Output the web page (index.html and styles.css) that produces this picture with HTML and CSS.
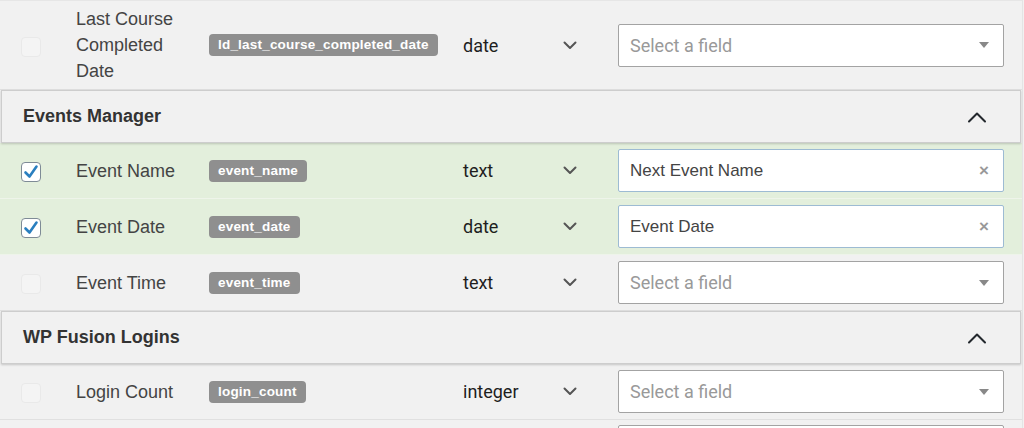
FILE: index.html
```html
<!DOCTYPE html>
<html lang="en">
<head>
<meta charset="utf-8">
<title>Field mapping</title>
<link rel="stylesheet" href="styles.css">
</head>
<body>
<div class="table">
  <div class="row tall">
    <div class="c-check"><span class="cb"></span></div>
    <div class="c-label">Last Course<br>Completed<br>Date</div>
    <div class="c-key"><span class="badge">ld_last_course_completed_date</span></div>
    <div class="c-type"><span>date</span><svg class="chev" viewBox="0 0 14 9" width="14" height="9"><path d="M1.5 1.5 L7 7 L12.5 1.5" /></svg></div>
    <div class="c-field"><div class="sel"><span class="ph">Select a field</span><span class="arrow"></span></div></div>
  </div>

  <div class="group">
    <span class="group-title">Events Manager</span>
    <svg class="chev-up" viewBox="0 0 20 12" width="20" height="12"><path d="M2 10.5 L10 2.5 L18 10.5" /></svg>
  </div>

  <div class="row on">
    <div class="c-check"><span class="cb checked"><svg viewBox="0 0 20 20" width="20" height="20"><path d="M4.5 10.5 L8.5 14.5 L15.5 4.5" /></svg></span></div>
    <div class="c-label">Event Name</div>
    <div class="c-key"><span class="badge">event_name</span></div>
    <div class="c-type"><span>text</span><svg class="chev" viewBox="0 0 14 9" width="14" height="9"><path d="M1.5 1.5 L7 7 L12.5 1.5" /></svg></div>
    <div class="c-field"><div class="sel filled"><span class="val">Next Event Name</span><span class="clear">&times;</span></div></div>
  </div>

  <div class="row on">
    <div class="c-check"><span class="cb checked"><svg viewBox="0 0 20 20" width="20" height="20"><path d="M4.5 10.5 L8.5 14.5 L15.5 4.5" /></svg></span></div>
    <div class="c-label">Event Date</div>
    <div class="c-key"><span class="badge">event_date</span></div>
    <div class="c-type"><span>date</span><svg class="chev" viewBox="0 0 14 9" width="14" height="9"><path d="M1.5 1.5 L7 7 L12.5 1.5" /></svg></div>
    <div class="c-field"><div class="sel filled"><span class="val">Event Date</span><span class="clear">&times;</span></div></div>
  </div>

  <div class="row">
    <div class="c-check"><span class="cb"></span></div>
    <div class="c-label">Event Time</div>
    <div class="c-key"><span class="badge">event_time</span></div>
    <div class="c-type"><span>text</span><svg class="chev" viewBox="0 0 14 9" width="14" height="9"><path d="M1.5 1.5 L7 7 L12.5 1.5" /></svg></div>
    <div class="c-field"><div class="sel"><span class="ph">Select a field</span><span class="arrow"></span></div></div>
  </div>

  <div class="group">
    <span class="group-title">WP Fusion Logins</span>
    <svg class="chev-up" viewBox="0 0 20 12" width="20" height="12"><path d="M2 10.5 L10 2.5 L18 10.5" /></svg>
  </div>

  <div class="row">
    <div class="c-check"><span class="cb"></span></div>
    <div class="c-label">Login Count</div>
    <div class="c-key"><span class="badge">login_count</span></div>
    <div class="c-type"><span>integer</span><svg class="chev" viewBox="0 0 14 9" width="14" height="9"><path d="M1.5 1.5 L7 7 L12.5 1.5" /></svg></div>
    <div class="c-field"><div class="sel"><span class="ph">Select a field</span><span class="arrow"></span></div></div>
  </div>

  <div class="row next">
    <div class="c-check"></div>
    <div class="c-label"></div>
    <div class="c-key"></div>
    <div class="c-type"></div>
    <div class="c-field"><div class="sel"></div></div>
  </div>
</div>
</body>
</html>
```

FILE: styles.css
```css
* { box-sizing: border-box; }

html, body {
  margin: 0;
  padding: 0;
  background: #f1f1f1;
  overflow: hidden;
}

body {
  font-family: "Liberation Sans", Arial, sans-serif;
  color: #444;
}

.table {
  width: 1023px;
  border-right: 1px solid #e4e4e4;
  border-top: 1px solid #e6e6e6;
}

.row {
  display: grid;
  grid-template-columns: 76px 133px 254px 155px 386px 1fr;
  align-items: center;
  height: 56px;
  border-bottom: 1px solid #e0e0e0;
  background: #f1f1f1;
}

.row.tall {
  height: 89px;
}

.row.on {
  background: #e3efdc;
  border-bottom-color: #eef4ea;
}

.row.next {
  align-items: start;
  padding-top: 5px;
}

.c-check {
  padding-left: 21px;
  display: flex;
  align-items: center;
  padding-top: 3px;
}

.cb {
  display: block;
  width: 20px;
  height: 20px;
  border-radius: 4px;
  background: #f4f4f4;
  border: 1px solid #e9e9e9;
}

.cb.checked {
  background: #fff;
  border: 1px solid #7e8b96;
  position: relative;
}

.cb.checked svg {
  position: absolute;
  left: -1px;
  top: -1px;
}

.cb.checked path {
  fill: none;
  stroke: #2a7fbf;
  stroke-width: 2.6;
  stroke-linecap: round;
  stroke-linejoin: round;
}

.c-label {
  font-size: 18px;
  line-height: 26px;
  color: #444;
}

.badge {
  display: inline-block;
  background: #8f8f8f;
  color: #fff;
  font-weight: bold;
  font-size: 13.5px;
  line-height: 22px;
  height: 22px;
  padding: 0 9px;
  border-radius: 4px;
  letter-spacing: 0.2px;
}

.c-type {
  display: flex;
  align-items: center;
  justify-content: space-between;
  width: 114px;
  font-family: Roboto, "Liberation Sans", sans-serif;
  font-size: 18px;
  color: #1e1e1e;
}

.chev path {
  fill: none;
  stroke: #555;
  stroke-width: 2;
  stroke-linecap: round;
  stroke-linejoin: round;
}

.sel {
  height: 43px;
  width: 386px;
  background: #fff;
  border: 1px solid #a3a3a3;
  border-radius: 2px;
  display: flex;
  align-items: center;
  justify-content: space-between;
  padding: 0 14px 0 11px;
}

.sel.filled {
  border-color: #9dbbd3;
}

.ph {
  font-family: Roboto, "Liberation Sans", sans-serif;
  font-size: 18px;
  color: #999;
}

.val {
  font-size: 17px;
  color: #444;
}

.arrow {
  width: 0;
  height: 0;
  border-left: 5px solid transparent;
  border-right: 5px solid transparent;
  border-top: 6px solid #888;
}

.clear {
  font-weight: bold;
  font-size: 17px;
  color: #999;
  line-height: 1;
}

.group {
  display: flex;
  align-items: center;
  justify-content: space-between;
  height: 53px;
  margin: 0 1px 0 1px;
  padding: 0 33px 0 21px;
  background: #f1f1f1;
  border: 1px solid #cdcdcd;
  box-shadow: 0 1px 2px rgba(0, 0, 0, 0.18);
  position: relative;
}

.group-title {
  font-weight: bold;
  font-size: 18px;
  color: #333;
}

.chev-up path {
  fill: none;
  stroke: #23282d;
  stroke-width: 2;
  stroke-linecap: round;
  stroke-linejoin: round;
}
```
